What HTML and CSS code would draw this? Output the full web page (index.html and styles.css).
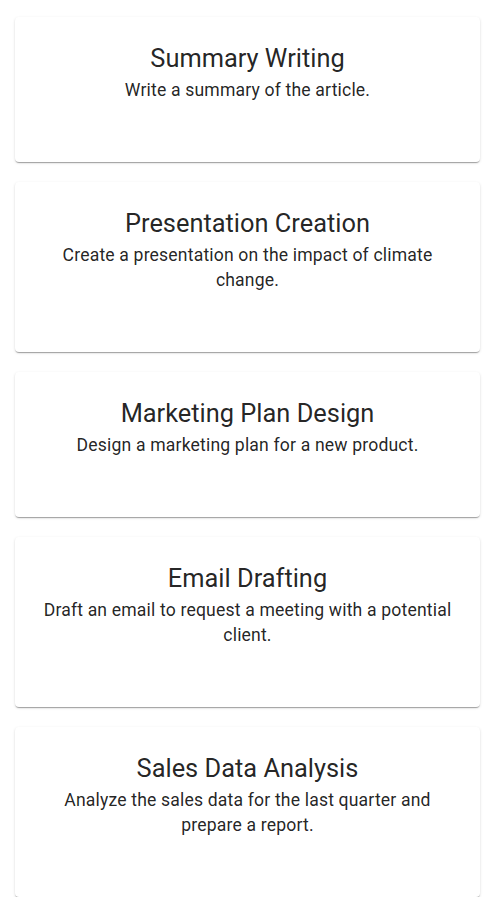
FILE: index.html
```html
<!DOCTYPE html>
<html lang="en">
<head>
<meta charset="utf-8">
<link rel="stylesheet" href="styles.css">
</head>
<body>
<main class="list">
  <section class="card">
    <h2 class="title">Summary Writing</h2>
    <p class="desc">Write a summary of the article.</p>
  </section>
  <section class="card">
    <h2 class="title">Presentation Creation</h2>
    <p class="desc">Create a presentation on the impact of climate change.</p>
  </section>
  <section class="card">
    <h2 class="title">Marketing Plan Design</h2>
    <p class="desc">Design a marketing plan for a new product.</p>
  </section>
  <section class="card">
    <h2 class="title">Email Drafting</h2>
    <p class="desc">Draft an email to request a meeting with a potential client.</p>
  </section>
  <section class="card">
    <h2 class="title">Sales Data Analysis</h2>
    <p class="desc">Analyze the sales data for the last quarter and prepare a report.</p>
  </section>
</main>
</body>
</html>
```
FILE: styles.css
```css
* { box-sizing: border-box; }
html, body { margin: 0; padding: 0; background: #fff; }
body {
  font-family: Roboto, "Liberation Sans", sans-serif;
  color: rgba(0,0,0,0.87);
}
.list {
  display: flex;
  flex-direction: column;
  gap: 20px;
  padding: 17px 21px 0 15px;
}
.card {
  background: #fff;
  border-radius: 4px;
  box-shadow: 0 2px 1px -1px rgba(0,0,0,0.2), 0 1px 1px 0 rgba(0,0,0,0.14), 0 1px 3px 0 rgba(0,0,0,0.12);
  padding: 24px 24px 59px;
  text-align: center;
}
.title {
  margin: 0;
  font-size: 25.4px;
  font-weight: 400;
  line-height: 34px;
}
.desc {
  margin: 3px 0 0;
  font-size: 17.6px;
  line-height: 25px;
  letter-spacing: 0.00938em;
}
```
